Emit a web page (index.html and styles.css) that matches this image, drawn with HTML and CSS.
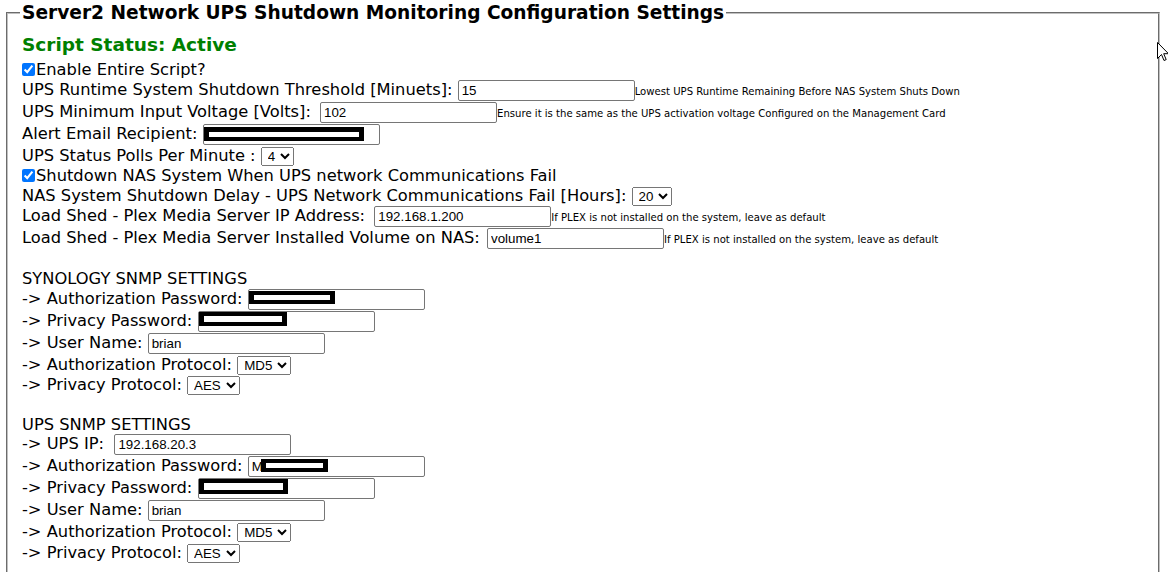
FILE: index.html
```html
<!DOCTYPE html>
<html>
<head>
<meta charset="utf-8">
<title>Server2 Network UPS Shutdown Monitoring Configuration Settings</title>
<link rel="stylesheet" href="styles.css">
</head>
<body>
<fieldset class="panel">
  <legend class="title">Server2 Network UPS Shutdown Monitoring Configuration Settings</legend>
  <div class="status">Script Status: Active</div>

  <div class="row"><input type="checkbox" class="check" checked>Enable Entire Script?</div>
  <div class="row row-in">UPS Runtime System Shutdown Threshold [Minuets]: <input type="text" class="field" value="15"><span class="hint">Lowest UPS Runtime Remaining Before NAS System Shuts Down</span></div>
  <div class="row row-in">UPS Minimum Input Voltage [Volts]: <input type="text" class="field wide-gap" value="102"><span class="hint">Ensure it is the same as the UPS activation voltage Configured on the Management Card</span></div>
  <div class="row row-in">Alert Email Recipient: <span class="masked"><input type="text" class="field" value=""><span class="redact r-email"></span></span></div>
  <div class="row row-sel">UPS Status Polls Per Minute : <select class="pick"><option>1</option><option>2</option><option>3</option><option selected>4</option></select></div>
  <div class="row"><input type="checkbox" class="check" checked>Shutdown NAS System When UPS network Communications Fail</div>
  <div class="row row-sel">NAS System Shutdown Delay - UPS Network Communications Fail [Hours]: <select class="pick"><option>10</option><option selected>20</option></select></div>
  <div class="row row-in">Load Shed - Plex Media Server IP Address: <input type="text" class="field wide-gap" value="192.168.1.200"><span class="hint">If PLEX is not installed on the system, leave as default</span></div>
  <div class="row row-in">Load Shed - Plex Media Server Installed Volume on NAS: <input type="text" class="field small-gap" value="volume1"><span class="hint">If PLEX is not installed on the system, leave as default</span></div>

  <div class="section">
    <div class="row">SYNOLOGY SNMP SETTINGS</div>
    <div class="row row-in">-&gt; Authorization Password: <span class="masked"><input type="text" class="field" value=""><span class="redact r-syn-auth"></span></span></div>
    <div class="row row-in">-&gt; Privacy Password: <span class="masked"><input type="text" class="field" value=""><span class="redact r-syn-priv"></span></span></div>
    <div class="row row-in">-&gt; User Name: <input type="text" class="field" value="brian"></div>
    <div class="row row-sel">-&gt; Authorization Protocol: <select class="pick"><option selected>MD5</option><option>SHA</option></select></div>
    <div class="row row-sel">-&gt; Privacy Protocol: <select class="pick"><option selected>AES</option><option>DES</option></select></div>
  </div>

  <div class="section">
    <div class="row">UPS SNMP SETTINGS</div>
    <div class="row row-in">-&gt; UPS IP:&nbsp; <input type="text" class="field" value="192.168.20.3"></div>
    <div class="row row-in">-&gt; Authorization Password: <span class="masked"><input type="text" class="field" value="M"><span class="redact r-ups-auth"></span></span></div>
    <div class="row row-in">-&gt; Privacy Password: <span class="masked"><input type="text" class="field" value=""><span class="redact r-ups-priv"></span></span></div>
    <div class="row row-in">-&gt; User Name: <input type="text" class="field" value="brian"></div>
    <div class="row row-sel">-&gt; Authorization Protocol: <select class="pick"><option selected>MD5</option><option>SHA</option></select></div>
    <div class="row row-sel">-&gt; Privacy Protocol: <select class="pick"><option selected>AES</option><option>DES</option></select></div>
  </div>
</fieldset>

<svg class="pointer" width="12" height="20" viewBox="0 0 12 20">
  <path d="M0.5 0.5 L0.5 16.5 L4.5 12.5 L7 18.5 L9.2 17.6 L6.7 11.7 L11.5 11.7 Z" fill="#fff" stroke="#000" stroke-width="1"/>
</svg>
</body>
</html>
```

FILE: styles.css
```css
html, body {
  margin: 0;
  padding: 0;
  background: #fff;
  overflow: hidden;
}

body {
  font-family: "DejaVu Sans", Verdana, sans-serif;
  font-size: 16.3px;
  color: #000;
  position: relative;
  height: 572px;
}

.panel {
  margin: 2px 0 0 6px;
  width: 1154px;
  box-sizing: border-box;
  border: 2px groove rgb(192, 192, 192);
  padding: 0 10px 12px 14px;
  min-width: 0;
}

.title {
  font-family: "DejaVu Sans", Verdana, sans-serif;
  font-weight: bold;
  font-size: 18.6px;
  line-height: 22px;
  padding: 0 2px;
  margin-left: -2px;
}

.status {
  color: #008000;
  font-weight: bold;
  font-size: 18.5px;
  line-height: 22px;
  padding: 10px 0 4px;
}

.row {
  height: 19.5px;
  line-height: 20.7px;
  white-space: nowrap;
}

.row-in {
  height: 22px;
}

.row-sel {
  height: 20.5px;
}

.section {
  margin-top: 19px;
}

.check {
  margin: 0 1px 0 0;
  width: 13px;
  height: 13px;
  vertical-align: -1px;
}

.field {
  font-family: "Liberation Sans", Arial, sans-serif;
  font-size: 13.333px;
  width: 177px;
  height: 21px;
  box-sizing: border-box;
  border: 1px solid #767676;
  border-radius: 2px;
  padding: 1px 3px;
  margin: 0;
  color: #000;
}

.wide-gap {
  margin-left: 4px;
}

.small-gap {
  margin-left: 2px;
}

.hint {
  font-family: "DejaVu Sans", Verdana, sans-serif;
  font-size: 10.1px;
}

.pick {
  font-family: "Liberation Sans", Arial, sans-serif;
  font-size: 13.333px;
  margin: 0;
  padding: 0 1px 0 2px;
}

.masked {
  position: relative;
  display: inline-block;
  line-height: normal;
}

.redact {
  position: absolute;
  box-sizing: border-box;
  background: #fff;
  border: 5px solid #000;
}

.r-email { left: 1px; top: 3px; width: 160px; height: 14px; border-width: 5px 5px 4px; }
.r-syn-auth { left: 1px; top: 2px; width: 86px; height: 13px; border-width: 4px 5px 4px; }
.r-syn-priv { left: 1px; top: 1px; width: 88px; height: 14px; border-width: 4px 5px 4px; }
.r-ups-auth { left: 13px; top: 3px; width: 67px; height: 13px; border-width: 4px 5px 4px; }
.r-ups-priv { left: 1px; top: 1px; width: 89px; height: 15px; border-width: 4px 5px 4px; }

.pointer {
  position: absolute;
  left: 1157px;
  top: 42px;
}
```
